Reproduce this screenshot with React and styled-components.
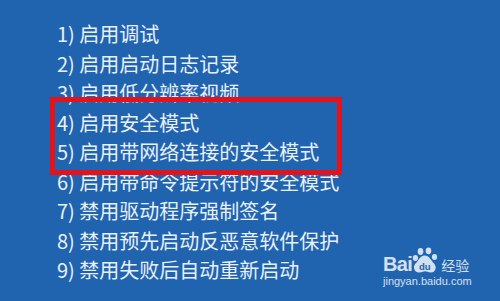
import React from 'react';
import styled, { createGlobalStyle } from 'styled-components';

const GlobalStyle = createGlobalStyle`
  html, body {
    margin: 0;
    padding: 0;
    background: #2064b0;
  }
`;

const Screen = styled.div`
  position: relative;
  width: 500px;
  height: 301px;
  overflow: hidden;
  background: #2064b0;
  font-family: "Noto Sans CJK SC", "Noto Sans", sans-serif;
`;

const OptionList = styled.ul`
  list-style: none;
  margin: 0;
  padding: 19px 0 0 57px;
  display: flex;
  flex-direction: column;
`;

const Option = styled.li`
  color: #e9f0f9;
  font-size: 20px;
  line-height: 29.5px;
  white-space: nowrap;
`;

const Highlight = styled.div`
  position: absolute;
  left: 50px;
  top: 97px;
  width: 282px;
  height: 68px;
  border: 5px solid #e3121b;
`;

const Watermark = styled.div`
  position: absolute;
  left: 383px;
  top: 246px;
  display: flex;
  flex-direction: column;
  opacity: 0.8;
  color: #ffffff;
`;

const Brand = styled.div`
  display: flex;
  align-items: flex-end;
  height: 28px;
`;

const BrandWord = styled.span`
  font-family: "Liberation Sans", Arial, sans-serif;
  font-weight: 700;
  font-size: 20px;
  line-height: 20px;
  letter-spacing: -0.6px;
`;

const BrandCn = styled.span`
  font-family: "Noto Sans CJK SC", sans-serif;
  font-size: 14px;
  line-height: 17px;
  margin-left: 1px;
`;

const Domain = styled.span`
  font-family: "Liberation Sans", Arial, sans-serif;
  font-size: 11px;
  line-height: 13px;
  margin-top: 1px;
`;

const options = [
  '1) 启用调试',
  '2) 启用启动日志记录',
  '3) 启用低分辨率视频',
  '4) 启用安全模式',
  '5) 启用带网络连接的安全模式',
  '6) 启用带命令提示符的安全模式',
  '7) 禁用驱动程序强制签名',
  '8) 禁用预先启动反恶意软件保护',
  '9) 禁用失败后自动重新启动',
];

const Paw = () => (
  <svg width="28" height="27" viewBox="0 0 28 27">
    <g fill="#ffffff">
      <ellipse cx="8.5" cy="4.5" rx="2.8" ry="3.4" />
      <ellipse cx="16.5" cy="3.8" rx="2.8" ry="3.4" />
      <ellipse cx="3.4" cy="11" rx="2.6" ry="3" />
      <ellipse cx="22.5" cy="10" rx="2.6" ry="3" />
      <path d="M12.5 8.5 C8 8.5 6.5 14 3.5 16.5 C0.5 19.5 2 26 7.5 25.5 C10 25.3 11.5 24.3 13 24.3 C14.5 24.3 16.5 25.6 19 25.5 C24 25.3 25 19.5 22 16.5 C19 13.5 17.5 8.5 12.5 8.5 Z" />
    </g>
    <text x="12.8" y="22.5" textAnchor="middle" fontFamily="Liberation Sans, Arial, sans-serif" fontWeight="700" fontSize="9.5" fill="#2064b0">du</text>
  </svg>
);

export default function App() {
  return (
    <>
      <GlobalStyle />
      <Screen>
        <OptionList>
          {options.map((text) => (
            <Option key={text}>{text}</Option>
          ))}
        </OptionList>
        <Highlight />
        <Watermark>
          <Brand>
            <BrandWord>Bai</BrandWord>
            <Paw />
            <BrandCn>经验</BrandCn>
          </Brand>
          <Domain>jingyan.baidu.com</Domain>
        </Watermark>
      </Screen>
    </>
  );
}
